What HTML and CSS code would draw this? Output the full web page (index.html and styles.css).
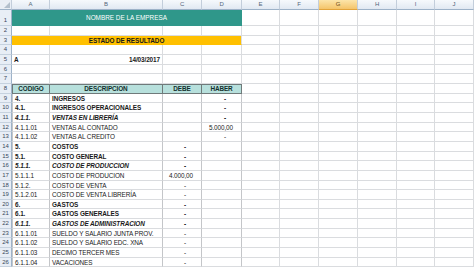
FILE: index.html
```html
<!DOCTYPE html>
<html lang="es">
<head>
  <meta charset="UTF-8">
  <title>Estado de Resultado</title>
  <link rel="stylesheet" href="styles.css">
</head>
<body>
  <div class="sheet">
    <!-- column letters -->
    <div class="row colhead">
      <div class="corner"><span class="tri"></span></div>
      <div>A</div><div>B</div><div>C</div><div>D</div><div>E</div><div>F</div>
      <div class="sel">G</div><div>H</div><div>I</div><div>J</div>
    </div>

    <div class="row tall">
      <div class="rh">1</div><div class="title">NOMBRE DE LA EMPRESA</div>
      <div></div><div></div><div></div><div></div><div></div><div></div>
    </div>
    <div class="row">
      <div class="rh">2</div><div></div><div></div><div></div><div></div>
      <div></div><div></div><div></div><div></div><div></div><div></div>
    </div>
    <div class="row">
      <div class="rh">3</div><div class="banner">ESTADO DE RESULTADO</div>
      <div></div><div></div><div></div><div></div><div></div><div></div>
    </div>
    <div class="row">
      <div class="rh">4</div><div></div><div></div><div></div><div></div>
      <div></div><div></div><div></div><div></div><div></div><div></div>
    </div>
    <div class="row">
      <div class="rh">5</div><div class="strong">A</div><div class="strong right">14/03/2017</div><div></div><div></div>
      <div></div><div></div><div></div><div></div><div></div><div></div>
    </div>
    <div class="row">
      <div class="rh">6</div><div></div><div></div><div></div><div></div>
      <div></div><div></div><div></div><div></div><div></div><div></div>
    </div>
    <div class="row">
      <div class="rh">7</div><div></div><div></div><div></div><div></div>
      <div></div><div></div><div></div><div></div><div></div><div></div>
    </div>

    <!-- table header -->
    <div class="row head">
      <div class="rh">8</div><div class="th">CODIGO</div><div class="th">DESCRIPCION</div><div class="th">DEBE</div><div class="th">HABER</div>
      <div></div><div></div><div></div><div></div><div></div><div></div>
    </div>

    <div class="row data b">
      <div class="rh">9</div><div>4.</div><div>INGRESOS</div><div></div><div class="dash">-</div>
      <div></div><div></div><div></div><div></div><div></div><div></div>
    </div>
    <div class="row data b">
      <div class="rh">10</div><div>4.1.</div><div>INGRESOS OPERACIONALES</div><div></div><div class="dash">-</div>
      <div></div><div></div><div></div><div></div><div></div><div></div>
    </div>
    <div class="row data bi">
      <div class="rh">11</div><div>4.1.1.</div><div>VENTAS EN LIBRERÍA</div><div></div><div class="dash">-</div>
      <div></div><div></div><div></div><div></div><div></div><div></div>
    </div>
    <div class="row data">
      <div class="rh">12</div><div>4.1.1.01</div><div>VENTAS AL CONTADO</div><div></div><div class="num">5.000,00</div>
      <div></div><div></div><div></div><div></div><div></div><div></div>
    </div>
    <div class="row data">
      <div class="rh">13</div><div>4.1.1.02</div><div>VENTAS AL CREDITO</div><div></div><div class="dash">-</div>
      <div></div><div></div><div></div><div></div><div></div><div></div>
    </div>
    <div class="row data b">
      <div class="rh">14</div><div>5.</div><div>COSTOS</div><div class="dash">-</div><div></div>
      <div></div><div></div><div></div><div></div><div></div><div></div>
    </div>
    <div class="row data b">
      <div class="rh">15</div><div>5.1.</div><div>COSTO GENERAL</div><div class="dash">-</div><div></div>
      <div></div><div></div><div></div><div></div><div></div><div></div>
    </div>
    <div class="row data bi">
      <div class="rh">16</div><div>5.1.1.</div><div>COSTO DE PRODUCCION</div><div class="dash">-</div><div></div>
      <div></div><div></div><div></div><div></div><div></div><div></div>
    </div>
    <div class="row data">
      <div class="rh">17</div><div>5.1.1.1</div><div>COSTO DE PRODUCION</div><div class="num">4.000,00</div><div></div>
      <div></div><div></div><div></div><div></div><div></div><div></div>
    </div>
    <div class="row data">
      <div class="rh">18</div><div>5.1.2.</div><div>COSTO DE VENTA</div><div class="dash">-</div><div></div>
      <div></div><div></div><div></div><div></div><div></div><div></div>
    </div>
    <div class="row data">
      <div class="rh">19</div><div>5.1.2.01</div><div>COSTO DE VENTA LIBRERÍA</div><div class="dash">-</div><div></div>
      <div></div><div></div><div></div><div></div><div></div><div></div>
    </div>
    <div class="row data b">
      <div class="rh">20</div><div>6.</div><div>GASTOS</div><div class="dash">-</div><div></div>
      <div></div><div></div><div></div><div></div><div></div><div></div>
    </div>
    <div class="row data b">
      <div class="rh">21</div><div>6.1.</div><div>GASTOS GENERALES</div><div class="dash">-</div><div></div>
      <div></div><div></div><div></div><div></div><div></div><div></div>
    </div>
    <div class="row data bi">
      <div class="rh">22</div><div>6.1.1.</div><div>GASTOS DE ADMINISTRACION</div><div class="dash">-</div><div></div>
      <div></div><div></div><div></div><div></div><div></div><div></div>
    </div>
    <div class="row data">
      <div class="rh">23</div><div>6.1.1.01</div><div>SUELDO Y SALARIO JUNTA PROV.</div><div class="dash">-</div><div></div>
      <div></div><div></div><div></div><div></div><div></div><div></div>
    </div>
    <div class="row data">
      <div class="rh">24</div><div>6.1.1.02</div><div>SUELDO Y SALARIO EDC. XNA</div><div class="dash">-</div><div></div>
      <div></div><div></div><div></div><div></div><div></div><div></div>
    </div>
    <div class="row data">
      <div class="rh">25</div><div>6.1.1.03</div><div>DECIMO TERCER MES</div><div class="dash">-</div><div></div>
      <div></div><div></div><div></div><div></div><div></div><div></div>
    </div>
    <div class="row data">
      <div class="rh">26</div><div>6.1.1.04</div><div>VACACIONES</div><div class="dash">-</div><div></div>
      <div></div><div></div><div></div><div></div><div></div><div></div>
    </div>
  </div>
</body>
</html>
```

FILE: styles.css
```css
body {
  margin: 0;
  font-family: "Liberation Sans", Arial, sans-serif;
  font-size: 6.4px;
  letter-spacing: -0.1px;
  color: #1a1a1a;
  background-color: #fff;
  overflow: hidden;
}
.sheet {
  width: 474px;
}
.row {
  display: grid;
  grid-template-columns: 12px 38px 113px 39px 40px 38px 39px 39px 39px 38px 1fr;
  height: 9.67px;
}
.row > div {
  border-right: 1px solid #dadcdf;
  border-bottom: 1px solid #dadcdf;
  padding: 0 2px;
  line-height: 9.5px;
  white-space: nowrap;
  overflow: hidden;
}
.row.tall {
  height: 16px;
}

/* column letters */
.colhead {
  height: 10px;
  background: linear-gradient(#f6f9fc, #dfe7f1);
}
.colhead > div {
  text-align: center;
  color: #56657a;
  font-size: 6px;
  border-right-color: #c3cedb;
  border-bottom-color: #9db2c8;
}
.colhead > .sel {
  background: linear-gradient(#fce5aa, #f4c46a);
  color: #6d4c14;
  border-bottom-color: #e2a43c;
}
.colhead > .corner {
  position: relative;
  background: #e9eef5;
}
.tri {
  position: absolute;
  right: 1px;
  bottom: 1px;
  width: 0;
  height: 0;
  border-left: 6px solid transparent;
  border-bottom: 6px solid #b3bfcc;
}

/* row numbers */
.row > .rh {
  background-color: #e8eef6;
  color: #3b485b;
  text-align: center;
  padding: 0;
  font-size: 6px;
  letter-spacing: 0;
  border-right-color: #9db2c8;
  border-bottom-color: #c6d2df;
}
.row.tall > .rh {
  line-height: 20px;
}

.row > .title {
  grid-column: span 4;
  background-color: #2f978a;
  border-color: #2f978a;
  color: #fff;
  text-align: center;
  line-height: 15px;
  letter-spacing: 0;
}
.row > .banner {
  grid-column: span 4;
  background-color: #ffc000;
  border-bottom-color: #ffc000;
  text-align: center;
  font-weight: bold;
}
.strong {
  font-weight: bold;
}
.row > .right {
  text-align: right;
}

/* table */
.row > .th {
  background-color: #b7e0dc;
  border-right: 1px solid #6f7a7a;
  border-bottom: 1px solid #6f7a7a;
  border-top: 1px solid #6f7a7a;
  text-align: center;
  font-weight: bold;
  color: #13302d;
  line-height: 8px;
}
.row.head > .th:nth-child(2) {
  border-left: 1px solid #6f7a7a;
}
.row.data > div:nth-child(2),
.row.data > div:nth-child(3),
.row.data > div:nth-child(4),
.row.data > div:nth-child(5) {
  border-right-color: #c4c6c9;
}
.row.data > div:nth-child(2) {
  border-left: 1px solid #c4c6c9;
}
.row.b > div:not(.rh) {
  font-weight: bold;
}
.row.bi > div:not(.rh) {
  font-weight: bold;
  font-style: italic;
}
.row > .num {
  text-align: right;
  padding-right: 8px;
}
.row > .dash {
  text-align: right;
  padding-right: 15px;
}
```
